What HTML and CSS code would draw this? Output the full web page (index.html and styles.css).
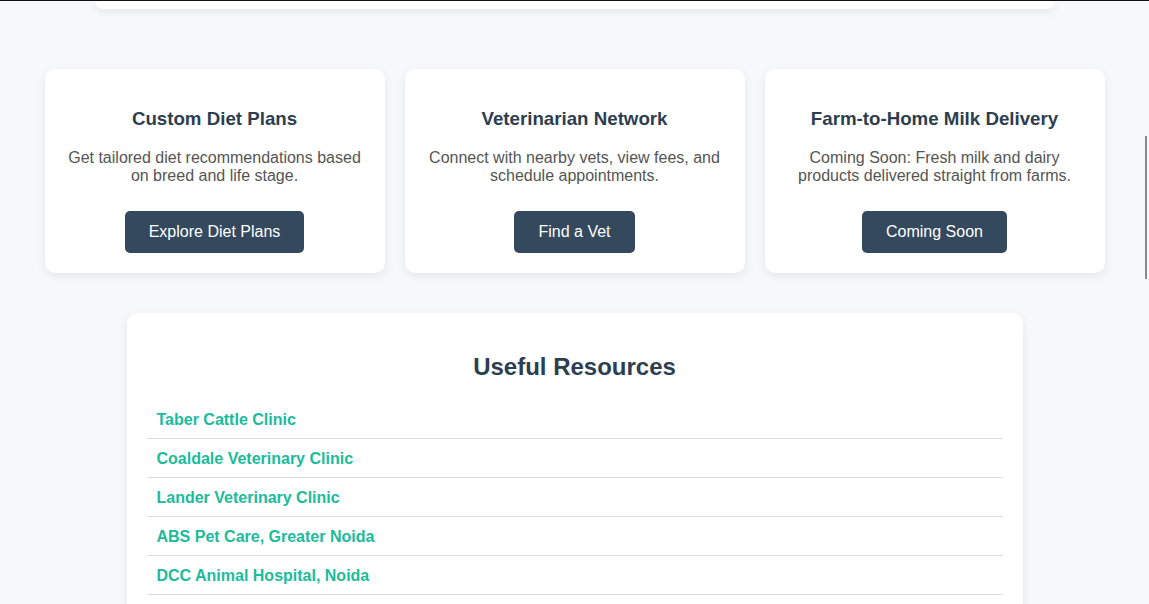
FILE: index.html
```html
<!DOCTYPE html>
<html lang="en">
<head>
<meta charset="utf-8">
<title>Livestock Care</title>
<link rel="stylesheet" href="styles.css">
</head>
<body>
  <div class="topline"></div>
  <div class="hero-card"></div>

  <section class="features">
    <div class="card">
      <h3>Custom Diet Plans</h3>
      <p>Get tailored diet recommendations based on breed and life stage.</p>
      <a class="btn" href="#">Explore Diet Plans</a>
    </div>
    <div class="card">
      <h3>Veterinarian Network</h3>
      <p>Connect with nearby vets, view fees, and schedule appointments.</p>
      <a class="btn" href="#">Find a Vet</a>
    </div>
    <div class="card">
      <h3>Farm-to-Home Milk Delivery</h3>
      <p>Coming Soon: Fresh milk and dairy products delivered straight from farms.</p>
      <a class="btn" href="#">Coming Soon</a>
    </div>
  </section>

  <section class="resources">
    <h2>Useful Resources</h2>
    <ul class="res-list">
      <li><a href="#">Taber Cattle Clinic</a></li>
      <li><a href="#">Coaldale Veterinary Clinic</a></li>
      <li><a href="#">Lander Veterinary Clinic</a></li>
      <li><a href="#">ABS Pet Care, Greater Noida</a></li>
      <li><a href="#">DCC Animal Hospital, Noida</a></li>
    </ul>
  </section>

  <div class="scroll-thumb"></div>
</body>
</html>
```

FILE: styles.css
```css
html, body {
  margin: 0;
  padding: 0;
  overflow: hidden;
  height: 100%;
}

body {
  background: #f7f8fa;
  font-family: "Liberation Sans", Arial, sans-serif;
  color: #333;
}

.topline {
  height: 1px;
  background: #111;
  position: relative;
  z-index: 2;
}

.hero-card {
  max-width: 960px;
  height: 8px;
  margin: 0 auto;
  background: #fff;
  border-radius: 0 0 10px 10px;
  box-shadow: 0 3px 8px rgba(0, 0, 0, 0.08);
}

.features {
  max-width: 1100px;
  margin: 60px auto 0;
  padding: 0 20px;
  box-sizing: border-box;
  display: grid;
  grid-template-columns: repeat(3, 1fr);
  gap: 20px;
}

.card {
  background: #fff;
  border-radius: 10px;
  padding: 20px;
  text-align: center;
  box-shadow: 0 3px 10px rgba(0, 0, 0, 0.08);
}

.card h3 {
  font-size: 18.72px;
  margin: 18.72px 0;
  color: #2c3e50;
}

.card p {
  font-size: 16px;
  color: #555;
  margin: 0 0 26px;
  padding-top: 1px;
}

.btn {
  display: inline-block;
  padding: 12px 24px;
  background: #34495e;
  color: #fff;
  text-decoration: none;
  border-radius: 5px;
  font-size: 16px;
}

.resources {
  box-sizing: border-box;
  max-width: 896px;
  margin: 40px auto 0;
  padding: 20px 20px 40px;
  background: #fff;
  border-radius: 10px;
  box-shadow: 0 3px 10px rgba(0, 0, 0, 0.08);
}

.resources h2 {
  text-align: center;
  font-size: 24px;
  color: #2c3e50;
  margin: 20px 0 19px;
}

.res-list {
  list-style: none;
  margin: 0;
  padding: 0;
}

.res-list li {
  padding: 11px 10px 9px;
  border-bottom: 1px solid #ddd;
}

.res-list a {
  color: #1abc9c;
  font-weight: bold;
  text-decoration: none;
  font-size: 16px;
}

.scroll-thumb {
  position: fixed;
  top: 136px;
  right: 2px;
  width: 2px;
  height: 143px;
  background: #888;
}
```
